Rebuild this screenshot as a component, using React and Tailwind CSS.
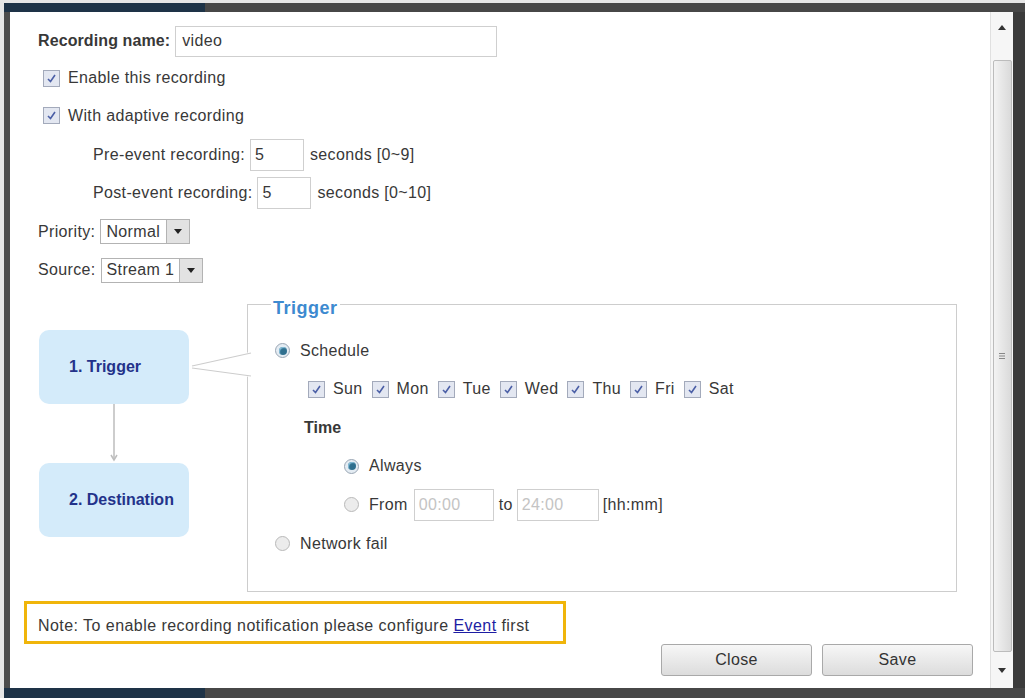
import React from 'react'

const font = { fontFamily: '"Liberation Sans", Arial, sans-serif' }

const Check = () => (
  <span className="inline-flex h-[17px] w-[17px] shrink-0 items-center justify-center border border-[#a3aabb] bg-[#e3e7f1]">
    <svg width="11" height="11" viewBox="0 0 11 11">
      <path d="M2 6 L4.5 8.5 L9 2" fill="none" stroke="#4b5fa6" strokeWidth="1.6" />
    </svg>
  </span>
)

const Radio = ({ on }) => (
  <span
    className={
      'inline-flex h-[15px] w-[15px] shrink-0 items-center justify-center rounded-full border ' +
      (on ? 'border-[#9aa6b4] bg-[#e4ecf3]' : 'border-[#b9b9b9] bg-[#ececec]')
    }
  >
    {on && <span className="h-[8px] w-[8px] rounded-full bg-[#2f6f8e] shadow-[inset_1px_1px_1px_#8cc4de]" />}
  </span>
)

const Select = ({ value, w }) => (
  <div className={'flex h-[25px] items-center border border-[#b3b3b3] bg-white ' + w}>
    <span className="flex-1 pl-[5px]">{value}</span>
    <span className="flex h-[23px] w-[23px] items-center justify-center border-l border-[#b3b3b3] bg-[#e2e2e2]">
      <svg width="8" height="5" viewBox="0 0 8 5">
        <path d="M0 0 L8 0 L4 5 Z" fill="#222" />
      </svg>
    </span>
  </div>
)

const Day = ({ label }) => (
  <span className="flex items-center gap-[8px]">
    <Check />
    <span>{label}</span>
  </span>
)

const App = () => {
  return (
    <div style={font} className="flex h-[698px] w-[1025px] flex-col overflow-hidden bg-[#e6e6e6] text-[16px] tracking-[0.35px] text-[#383838]">
      {/* top frame */}
      <div className="flex h-[12px] shrink-0 pl-[4px]">
        <div className="mt-[3px] w-[201px] bg-[#1e3347]" />
        <div className="mt-[3px] flex-1 bg-[#474747]" />
      </div>

      <div className="flex min-h-0 flex-1 pl-[4px]">
        <div className="w-[6px] bg-[#4d4d4d]" />

        {/* content */}
        <div className="flex w-[980px] flex-col bg-white">
          <div className="mt-[10px] flex h-[38px] items-center pl-[28px]">
            <span className="font-bold tracking-[0.1px]">Recording name:</span>
            <div className="ml-[5px] flex h-[31px] w-[322px] items-center border border-[#cfcfcf] pl-[6px]">video</div>
          </div>
          <div className="flex h-[36px] items-center gap-[8px] pl-[33px]">
            <Check />
            <span>Enable this recording</span>
          </div>
          <div className="flex h-[39px] items-center gap-[8px] pl-[33px]">
            <Check />
            <span>With adaptive recording</span>
          </div>
          <div className="flex h-[39px] items-center pl-[83px]">
            <span>Pre-event recording:</span>
            <div className="ml-[5px] flex h-[32px] w-[54px] items-center border border-[#cfcfcf] pl-[4px]">5</div>
            <span className="ml-[6px]">seconds [0~9]</span>
          </div>
          <div className="flex h-[38px] items-center pl-[83px]">
            <span>Post-event recording:</span>
            <div className="ml-[5px] flex h-[32px] w-[54px] items-center border border-[#cfcfcf] pl-[4px]">5</div>
            <span className="ml-[6px]">seconds [0~10]</span>
          </div>
          <div className="flex h-[39px] items-center pl-[28px]">
            <span>Priority:</span>
            <div className="ml-[5px]">
              <Select value="Normal" w="w-[90px]" />
            </div>
          </div>
          <div className="flex h-[38px] items-center pl-[28px]">
            <span>Source:</span>
            <div className="ml-[5px]">
              <Select value="Stream 1" w="w-[102px]" />
            </div>
          </div>

          {/* trigger section */}
          <div className="relative flex items-start">
            <div className="ml-[29px] mt-[41px] flex w-[150px] flex-col items-center">
              <div className="flex h-[74px] w-[150px] items-center rounded-[10px] bg-[#d4ebfa] pl-[30px] font-bold tracking-normal text-[#23328a]">
                1. Trigger
              </div>
              <svg width="10" height="59" viewBox="0 0 10 59">
                <line x1="5" y1="0" x2="5" y2="55" stroke="#bdbdbd" strokeWidth="1.5" />
                <path d="M2 51 L5 56 L8 51" fill="none" stroke="#bdbdbd" strokeWidth="1.5" />
              </svg>
              <div className="flex h-[74px] w-[150px] items-center rounded-[10px] bg-[#d4ebfa] pl-[30px] font-bold tracking-normal text-[#23328a]">
                2. Destination
              </div>
            </div>

            <fieldset className="ml-[58px] mt-[1px] h-[302px] w-[710px] border border-[#cdcdcd] px-0 pb-0">
              <legend className="ml-[23px] px-[2px] pt-[8px] text-[18px] font-bold leading-[20px] tracking-[0.5px] text-[#3d8ad0]">Trigger</legend>
              <div className="mt-[13px] flex h-[39px] items-center gap-[10px] pl-[27px]">
                <Radio on />
                <span>Schedule</span>
              </div>
              <div className="flex h-[38px] items-center gap-[9px] pl-[60px]">
                <Day label="Sun" />
                <Day label="Mon" />
                <Day label="Tue" />
                <Day label="Wed" />
                <Day label="Thu" />
                <Day label="Fri" />
                <Day label="Sat" />
              </div>
              <div className="flex h-[39px] items-center pl-[56px] font-bold tracking-normal">Time</div>
              <div className="flex h-[38px] items-center gap-[10px] pl-[96px]">
                <Radio on />
                <span>Always</span>
              </div>
              <div className="flex h-[39px] items-center pl-[96px]">
                <Radio />
                <span className="ml-[10px]">From</span>
                <div className="ml-[6px] flex h-[32px] w-[80px] items-center border border-[#cfcfcf] pl-[4px] text-[#c4c4c4]">00:00</div>
                <span className="ml-[5px]">to</span>
                <div className="ml-[4px] flex h-[32px] w-[82px] items-center border border-[#cfcfcf] pl-[4px] text-[#c4c4c4]">24:00</div>
                <span className="ml-[4px]">[hh:mm]</span>
              </div>
              <div className="flex h-[39px] items-center gap-[10px] pl-[27px]">
                <Radio />
                <span>Network fail</span>
              </div>
            </fieldset>

            {/* callout tail */}
            <svg width="64" height="30" viewBox="0 0 64 30" className="absolute left-[180px] top-[61px]">
              <path d="M2 16 L60 2 L63 2 L63 27 L60 27 L2 18 Z" fill="#fff" />
              <line x1="2" y1="16" x2="61" y2="3" stroke="#cdcdcd" strokeWidth="1.2" />
              <line x1="2" y1="18" x2="61" y2="26" stroke="#cdcdcd" strokeWidth="1.2" />
            </svg>
          </div>

          {/* note */}
          <div className="ml-[14px] mt-[9px] flex h-[43px] w-[542px] items-end border-[3px] border-[#f0b50a] pb-[3px] pl-[11px] tracking-[0.45px]">
            <span>
              Note: To enable recording notification please configure{' '}
              <span className="text-[#1d1da3] underline">Event</span> first
            </span>
          </div>

          {/* buttons */}
          <div className="flex justify-end gap-[10px] pr-[17px]">
            <button className="h-[32px] w-[151px] rounded-[3px] border border-[#a9a9a9] bg-gradient-to-b from-[#f7f7f7] to-[#dcdcdc] text-[16px] text-[#333]">
              Close
            </button>
            <button className="h-[32px] w-[151px] rounded-[3px] border border-[#a9a9a9] bg-gradient-to-b from-[#f7f7f7] to-[#dcdcdc] text-[16px] text-[#333]">
              Save
            </button>
          </div>
        </div>

        {/* scrollbar */}
        <div className="flex w-[23px] flex-col items-center border-l border-[#e0e0e0] bg-[#f6f6f6]">
          <div className="flex h-[48px] w-full justify-center pt-[13px]">
            <svg width="8" height="5" viewBox="0 0 8 5">
              <path d="M0 5 L8 5 L4 0 Z" fill="#333" />
            </svg>
          </div>
          <div className="flex h-[592px] w-[19px] items-center justify-center rounded-[2px] border border-[#bcbcbc] bg-gradient-to-r from-[#f3f3f3] to-[#dadada]">
            <svg width="8" height="8" viewBox="0 0 8 8">
              <path d="M1 1.5 H7 M1 4 H7 M1 6.5 H7" stroke="#888" strokeWidth="1" />
            </svg>
          </div>
          <div className="flex flex-1 items-center justify-center">
            <svg width="8" height="5" viewBox="0 0 8 5">
              <path d="M0 0 L8 0 L4 5 Z" fill="#333" />
            </svg>
          </div>
        </div>

        <div className="w-[12px] bg-[#3b3b3b]" />
      </div>

      {/* bottom frame */}
      <div className="flex h-[10px] shrink-0 pl-[4px]">
        <div className="w-[201px] bg-[#1e3347]" />
        <div className="flex-1 bg-[#474747]" />
      </div>
    </div>
  )
}

export default App
